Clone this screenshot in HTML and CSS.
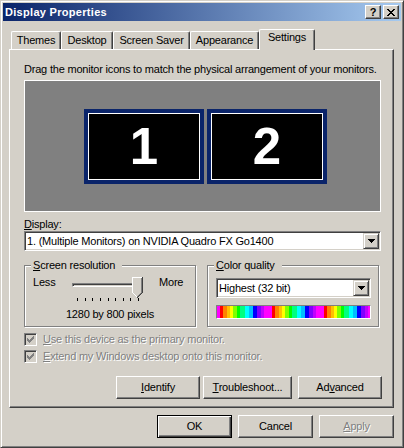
FILE: index.html
```html
<!DOCTYPE html>
<html lang="en">
<head>
    <meta charset="UTF-8">
    <title>Display Properties</title>
    <link rel="stylesheet" href="styles.css">
</head>
<body>
    <div class="window">
        <div class="titlebar">
            <span class="title">Display Properties</span>
            <div class="caption-buttons">
                <button class="cap-btn cap-help">?</button>
                <button class="cap-btn">
                    <svg width="8" height="7" viewBox="0 0 8 7" shape-rendering="crispEdges"><path d="M0 0h2v1H0z M6 0h2v1H6z M1 1h2v1H1z M5 1h2v1H5z M2 2h4v1H2z M3 3h2v1H3z M2 4h4v1H2z M1 5h2v1H1z M5 5h2v1H5z M0 6h2v1H0z M6 6h2v1H6z"/></svg>
                </button>
            </div>
        </div>

        <div class="content">
            <div class="tabs">
                <div class="tab tab-themes">Themes</div>
                <div class="tab tab-desktop">Desktop</div>
                <div class="tab tab-saver">Screen Saver</div>
                <div class="tab tab-appearance">Appearance</div>
                <div class="tab tab-settings active">Settings</div>
            </div>

            <div class="panel">
                <p class="hint">Drag the monitor icons to match the physical arrangement of your monitors.</p>

                <div class="arrange">
                    <div class="monitor">1</div>
                    <div class="monitor">2</div>
                </div>

                <label class="field-label"><u>D</u>isplay:</label>
                <div class="combo">
                    <span class="combo-text">1. (Multiple Monitors) on NVIDIA Quadro FX Go1400</span>
                    <span class="combo-btn">
                        <svg width="7" height="4" viewBox="0 0 7 4" shape-rendering="crispEdges"><path d="M0 0h7v1H6v1H5v1H4v1H3V3H2V2H1V1H0z"/></svg>
                    </span>
                </div>

                <div class="groups">
                    <fieldset class="group">
                        <legend><u>S</u>creen resolution</legend>
                        <div class="res-row">
                            <span class="res-less">Less</span>
                            <div class="slider">
                                <div class="track"></div>
                                <svg class="thumb" width="11" height="21" viewBox="0 0 11 21" shape-rendering="crispEdges">
                                    <path fill="#d4d0c8" d="M0 0h11v16h-1v1h-1v1h-1v1h-1v1h-1v1h-1v-1h-1v-1h-1v-1h-1v-1h-1v-1H0z"/>
                                    <path fill="#fff" d="M0 0h10v1H1v15H0z M1 16h1v1H1z M2 17h1v1H2z M3 18h1v1H3z M4 19h1v1H4z"/>
                                    <path fill="#808080" d="M9 1h1v15H9z M8 16h1v1H8z M7 17h1v1H7z M6 18h1v1H6z M5 19h1v1H5z"/>
                                    <path fill="#404040" d="M10 0h1v16h-1z M9 16h1v1H9z M8 17h1v1H8z M7 18h1v1H7z M6 19h1v1H6z M5 20h1v1H5z"/>
                                </svg>
                                <div class="ticks"><i></i><i></i><i></i><i></i><i></i><i></i><i></i><i></i><i></i></div>
                            </div>
                            <span class="res-more">More</span>
                        </div>
                        <div class="res-value">1280 by 800 pixels</div>
                    </fieldset>

                    <fieldset class="group">
                        <legend><u>C</u>olor quality</legend>
                        <div class="color-body">
                            <div class="combo combo-color">
                                <span class="combo-text">Highest (32 bit)</span>
                                <span class="combo-btn">
                                    <svg width="7" height="4" viewBox="0 0 7 4" shape-rendering="crispEdges"><path d="M0 0h7v1H6v1H5v1H4v1H3V3H2V2H1V1H0z"/></svg>
                                </span>
                            </div>
                            <div class="spectrum"></div>
                        </div>
                    </fieldset>
                </div>

                <div class="check check-first">
                    <span class="checkbox">
                        <svg width="7" height="7" viewBox="0 0 7 7" shape-rendering="crispEdges"><path fill="#808080" d="M6 0h1v1H6z M5 1h2v1H5z M0 2h1v1H0z M4 2h3v1H4z M0 3h2v1H0z M3 3h3v1H3z M0 4h5v1H0z M1 5h3v1H1z M2 6h1v1H2z"/></svg>
                    </span>
                    <span class="check-label"><u>U</u>se this device as the primary monitor.</span>
                </div>
                <div class="check">
                    <span class="checkbox">
                        <svg width="7" height="7" viewBox="0 0 7 7" shape-rendering="crispEdges"><path fill="#808080" d="M6 0h1v1H6z M5 1h2v1H5z M0 2h1v1H0z M4 2h3v1H4z M0 3h2v1H0z M3 3h3v1H3z M0 4h5v1H0z M1 5h3v1H1z M2 6h1v1H2z"/></svg>
                    </span>
                    <span class="check-label"><u>E</u>xtend my Windows desktop onto this monitor.</span>
                </div>

                <div class="panel-buttons">
                    <button class="btn btn-identify"><u>I</u>dentify</button>
                    <button class="btn btn-trouble"><u>T</u>roubleshoot...</button>
                    <button class="btn btn-advanced">Ad<u>v</u>anced</button>
                </div>
            </div>

            <div class="dialog-buttons">
                <button class="btn btn-default">OK</button>
                <button class="btn">Cancel</button>
                <button class="btn" disabled><u>A</u>pply</button>
            </div>
        </div>
    </div>
</body>
</html>
```

FILE: styles.css
```css
* {
    box-sizing: border-box;
}
body {
    margin: 0;
    background: #d4d0c8;
    font-family: "Liberation Sans", Arial, sans-serif;
    font-size: 11px;
    line-height: 13px;
    letter-spacing: -0.2px;
    color: #000;
}
.window {
    width: 404px;
    height: 448px;
    padding: 2px;
    background: #d4d0c8;
    border: 1px solid;
    border-color: #d4d0c8 #404040 #404040 #d4d0c8;
    box-shadow: inset 1px 1px #fff, inset -1px -1px #808080;
}

/* title bar */
.titlebar {
    height: 18px;
    display: flex;
    align-items: center;
    padding: 0 2px;
    background: linear-gradient(to right, #0a246a, #a6caf0);
    color: #fff;
}
.title {
    flex: 1;
    font-weight: bold;
    letter-spacing: 0.3px;
    line-height: 18px;
}
.caption-buttons {
    display: flex;
    gap: 2px;
}
.cap-btn {
    width: 16px;
    height: 14px;
    padding: 0;
    display: flex;
    align-items: center;
    justify-content: center;
    background: #d4d0c8;
    border: 1px solid;
    border-color: #fff #404040 #404040 #fff;
    box-shadow: inset -1px -1px #808080;
}
.cap-help {
    font: bold 11px "Liberation Sans", Arial, sans-serif;
    color: #000;
    padding-bottom: 1px;
}

/* tabs */
.content {
    padding: 8px 7px 0 6px;
}
.tabs {
    display: flex;
    align-items: flex-end;
    height: 20px;
    padding-left: 2px;
}
.tab {
    height: 18px;
    padding-top: 2px;
    text-align: center;
    background: #d4d0c8;
    border-left: 1px solid #fff;
    border-top: 1px solid #fff;
    border-right: 1px solid #404040;
    border-radius: 2px 2px 0 0;
    box-shadow: inset -1px 0 #808080;
}
.tab-themes { width: 50px; }
.tab-desktop { width: 52px; }
.tab-saver { width: 77px; }
.tab-appearance { width: 69px; }
.tab-settings { width: 56px; }
.tab.active {
    height: 21px;
    padding-top: 1px;
    margin-bottom: -1px;
    position: relative;
    z-index: 1;
}

/* settings page */
.panel {
    height: 359px;
    padding: 13px 12px 0 14px;
    border-left: 1px solid #fff;
    border-top: 1px solid #fff;
    border-right: 1px solid #404040;
    border-bottom: 1px solid #404040;
    box-shadow: inset -1px -1px #808080;
}
.hint {
    margin: 0;
}
.arrange {
    height: 132px;
    margin-top: 4px;
    padding-left: 6px;
    display: flex;
    align-items: center;
    justify-content: center;
    gap: 3px;
    background: #808080;
    border: 1px solid #fff;
}
.monitor {
    width: 120px;
    height: 75px;
    padding-top: 2px;
    display: flex;
    align-items: center;
    justify-content: center;
    background: #000;
    border: 4px solid #0a246a;
    box-shadow: inset 0 0 0 1px #fff;
    color: #fff;
    font-size: 51px;
    font-weight: bold;
    line-height: 50px;
    letter-spacing: 0;
}
.field-label {
    display: block;
    margin-top: 6px;
}
.combo {
    height: 20px;
    padding: 1px;
    display: flex;
    background: #fff;
    border: 1px solid;
    border-color: #808080 #fff #fff #808080;
    box-shadow: inset 1px 1px #404040, inset -1px -1px #d4d0c8;
}
.combo-text {
    flex: 1;
    padding-left: 1px;
    line-height: 16px;
    white-space: nowrap;
    overflow: hidden;
}
.combo-btn {
    flex: none;
    width: 16px;
    height: 16px;
    display: flex;
    align-items: center;
    justify-content: center;
    background: #d4d0c8;
    border: 1px solid;
    border-color: #d4d0c8 #404040 #404040 #d4d0c8;
    box-shadow: inset 1px 1px #fff, inset -1px -1px #808080;
}

/* group boxes */
.groups {
    display: flex;
    gap: 11px;
    margin-top: 8px;
}
.group {
    width: 172px;
    height: 68px;
    margin: 0;
    padding: 0;
    min-width: 0;
    border: 1px solid #808080;
    box-shadow: inset 1px 1px #fff, 1px 1px #fff;
}
.group legend {
    margin-left: 6px;
    padding: 0 7px 0 2px;
    line-height: 13px;
    background: #d4d0c8;
}
.res-row {
    display: flex;
    align-items: flex-start;
    padding: 4px 0 0 8px;
}
.res-less {
    width: 39px;
}
.res-more {
    margin-left: 15px;
}
.slider {
    position: relative;
    width: 72px;
    height: 26px;
    margin-top: 1px;
}
.track {
    width: 71px;
    height: 4px;
    margin-top: 6px;
    border: 1px solid;
    border-color: #808080 #fff #fff #808080;
    box-shadow: inset 1px 1px #404040, inset -1px -1px #d4d0c8;
}
.thumb {
    position: absolute;
    left: 60px;
    top: 0;
}
.ticks {
    width: 62px;
    height: 4px;
    margin: 11px 0 0 5px;
    display: flex;
    justify-content: space-between;
}
.ticks i {
    width: 1px;
    height: 3px;
    background: #000;
}
.res-value {
    margin-top: 5px;
    text-align: center;
}
.color-body {
    padding: 6px 0 0 8px;
}
.combo-color {
    width: 155px;
}
.spectrum {
    width: 155px;
    height: 14px;
    margin-top: 7px;
    border: 1px solid;
    border-color: #808080 #fff #fff #808080;
    background: repeating-linear-gradient(to right,
        #f0f 0 3px, #f00 3px 6px, #ff8000 6px 10px, #ffc000 10px 13px,
        #ff0 13px 16px, #80ff00 16px 20px, #0f0 20px 23px, #00ff80 23px 28px,
        #0ff 28px 32px, #00c0ff 32px 36px, #00f 36px 40px, #8000ff 40px 44px,
        #c000ff 44px 47px, #f0f 47px 52px);
}

/* check boxes */
.check {
    display: flex;
    align-items: center;
    height: 13px;
    margin-top: 4px;
}
.check-first {
    margin-top: 6px;
}
.checkbox {
    width: 13px;
    height: 13px;
    display: flex;
    align-items: center;
    justify-content: center;
    background: #d4d0c8;
    border: 1px solid;
    border-color: #808080 #fff #fff #808080;
    box-shadow: inset 1px 1px #404040, inset -1px -1px #d4d0c8;
}
.check-label {
    margin-left: 6px;
    color: #808080;
    text-shadow: 1px 1px #fff;
}

/* buttons */
.btn {
    height: 23px;
    padding: 0;
    font: inherit;
    letter-spacing: inherit;
    color: #000;
    background: #d4d0c8;
    border: 1px solid;
    border-color: #fff #404040 #404040 #fff;
    box-shadow: inset -1px -1px #808080;
}
.btn:disabled {
    color: #808080;
    text-shadow: 1px 1px #fff;
}
.btn-default {
    border-color: #000;
    box-shadow: inset 1px 1px #fff, inset -1px -1px #404040, inset -2px -2px #808080;
}
.panel-buttons {
    display: flex;
    justify-content: flex-end;
    margin: 13px -1px 0 0;
}
.btn-identify { width: 84px; }
.btn-trouble { width: 89px; margin-left: 3px; }
.btn-advanced { width: 84px; margin-left: 6px; }
.dialog-buttons {
    display: flex;
    justify-content: flex-end;
    gap: 6px;
    margin-top: 7px;
}
.dialog-buttons .btn {
    width: 75px;
}
```
